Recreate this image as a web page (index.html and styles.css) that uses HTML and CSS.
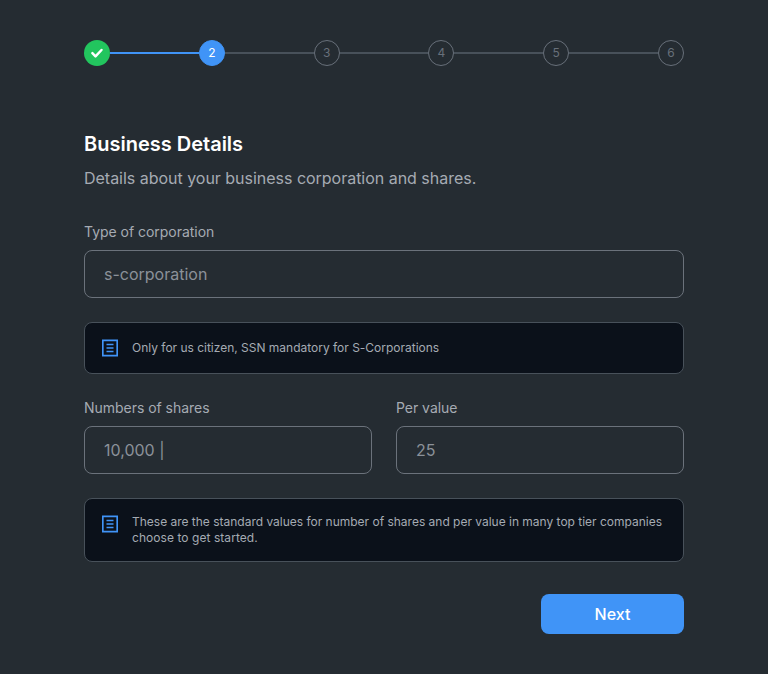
FILE: index.html
```html
<!DOCTYPE html>
<html lang="en">
<head>
<meta charset="utf-8">
<title>Business Details</title>
<link rel="stylesheet" href="styles.css">
</head>
<body>
<main class="page">
  <div class="stepper">
    <span class="step done"><svg width="26" height="26" viewBox="0 0 26 26"><path d="M8.4 13.2l3.1 3.1 6-6.3" fill="none" stroke="#fff" stroke-width="2.5" stroke-linecap="round" stroke-linejoin="round"/></svg></span>
    <span class="line active"></span>
    <span class="step current">2</span>
    <span class="line"></span>
    <span class="step">3</span>
    <span class="line"></span>
    <span class="step">4</span>
    <span class="line"></span>
    <span class="step">5</span>
    <span class="line"></span>
    <span class="step">6</span>
  </div>
  <h1>Business Details</h1>
  <p class="subtitle">Details about your business corporation and shares.</p>
  <div class="field">
    <span class="label">Type of corporation</span>
    <div class="input">s-corporation</div>
  </div>
  <div class="note">
    <svg class="doc" width="16" height="18" viewBox="0 0 16 18"><path d="M.8 1.3h14.4v15.4H.8zM4.5 5.5h7M4.5 9h7M4.5 12.5h7" fill="none" stroke="#4094f7" stroke-width="1.7"/></svg>
    <p>Only for us citizen, SSN mandatory for S-Corporations</p>
  </div>
  <div class="row">
    <div class="field">
      <span class="label">Numbers of shares</span>
      <div class="input">10,000 |</div>
    </div>
    <div class="field">
      <span class="label">Per value</span>
      <div class="input">25</div>
    </div>
  </div>
  <div class="note tall">
    <svg class="doc" width="16" height="18" viewBox="0 0 16 18"><path d="M.8 1.3h14.4v15.4H.8zM4.5 5.5h7M4.5 9h7M4.5 12.5h7" fill="none" stroke="#4094f7" stroke-width="1.7"/></svg>
    <p>These are the standard values for number of shares and per value in many top tier companies<br><span class="last">choose to get started.</span></p>
  </div>
  <button class="next">Next</button>
</main>
</body>
</html>
```
FILE: styles.css
```css
* { box-sizing: border-box; margin: 0; }
body { background: #252c32; font-family: Inter, sans-serif; color: #a5abb3; }
.page { width: 600px; height: 674px; margin-left: 84px; padding-top: 40px; display: flex; flex-direction: column; }
.stepper { display: flex; align-items: center; height: 26px; }
.step { width: 26px; height: 26px; border: 1px solid #68707a; border-radius: 50%; font-size: 12px; line-height: 24px; text-align: center; color: #68707a; }
.step svg { display: block; }
.done { background: #22c55e; border: 0; }
.current { background: #4094f7; border-color: #4094f7; color: #fff; }
.line { flex: 1; height: 2px; background: #48515a; }
.line.active { background: #4094f7; }
h1 { margin-top: 62px; font-size: 20px; line-height: 32px; font-weight: 600; color: #fff; }
.subtitle { margin-top: 6px; font-size: 16px; line-height: 24px; letter-spacing: -0.02px; }
.field { flex: 1; display: flex; flex-direction: column; }
.page > .field { flex: none; margin-top: 32px; }
.label { font-size: 14px; line-height: 20px; margin-bottom: 8px; letter-spacing: -0.03px; }
.input { height: 48px; border: 1px solid #6b727b; border-radius: 8px; padding: 0 19px; font-size: 16px; line-height: 46px; color: #8b9199; }
.note { margin-top: 24px; height: 52px; border: 1px solid #48515a; border-radius: 8px; background: #0b111a; display: flex; padding: 17px 17px 0; gap: 14px; }
.note.tall { height: 64px; padding-top: 15px; }
.doc { flex: none; margin-top: -1px; }
.note p { font-size: 12px; line-height: 16px; letter-spacing: -0.01px; }
.last { letter-spacing: 0.06px; }
.tall .doc { margin-top: 1px; }
.row { display: flex; gap: 24px; margin-top: 24px; }
.next { align-self: flex-end; margin-top: 32px; width: 143px; height: 40px; border: 0; border-radius: 8px; background: #4094f7; color: #fff; font: 500 16px/38px Inter, sans-serif; padding: 1px 0; }
```
